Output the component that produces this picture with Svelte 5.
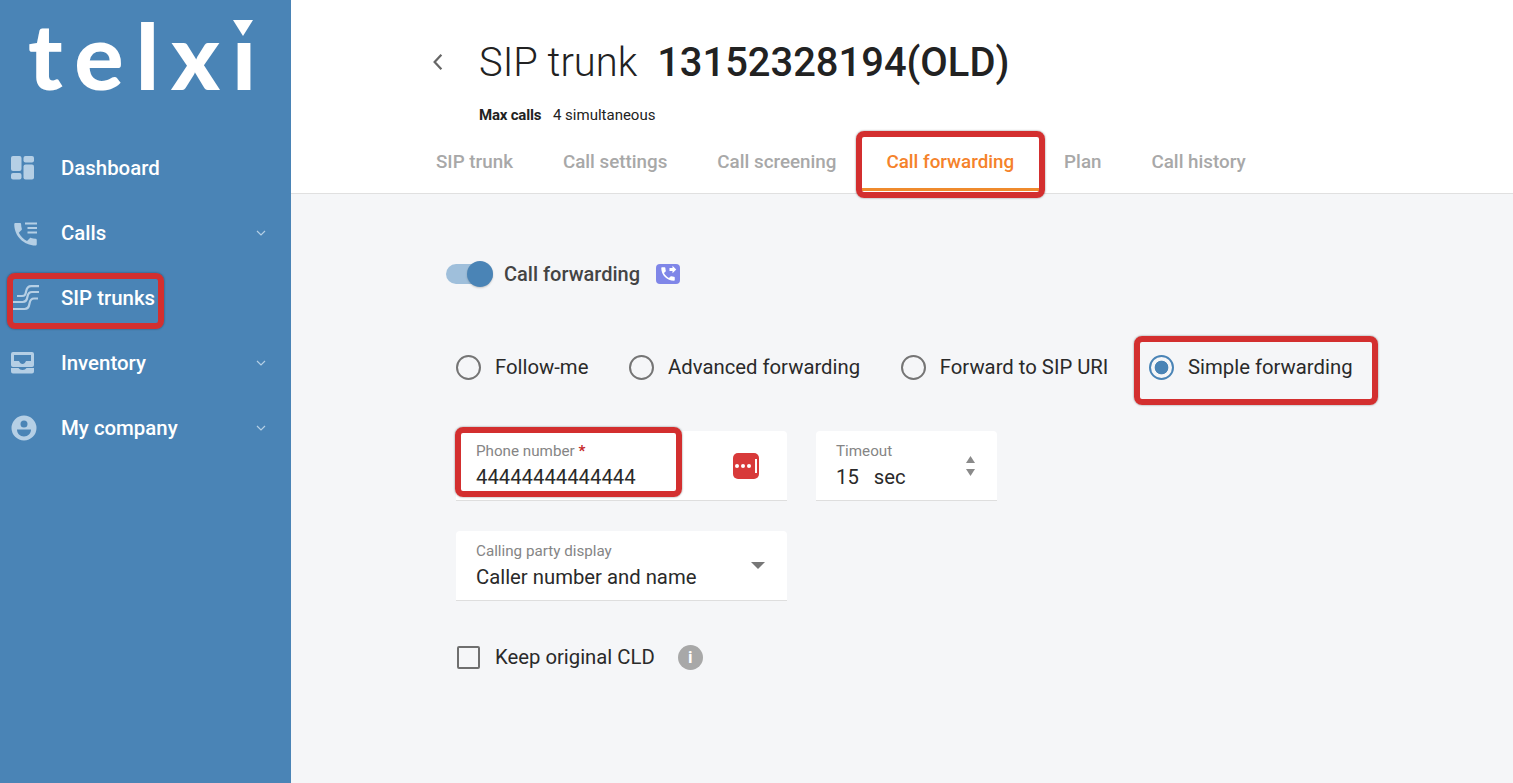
<script>
  const nav = [
    { label: 'Dashboard', icon: 'dashboard' },
    { label: 'Calls', icon: 'calls', more: true },
    { label: 'SIP trunks', icon: 'trunks' },
    { label: 'Inventory', icon: 'inventory', more: true },
    { label: 'My company', icon: 'company', more: true }
  ]
  const tabs = ['SIP trunk', 'Call settings', 'Call screening', 'Call forwarding', 'Plan', 'Call history']
  const radios = [
    { label: 'Follow-me' },
    { label: 'Advanced forwarding' },
    { label: 'Forward to SIP URI' },
    { label: 'Simple forwarding', on: true }
  ]
</script>

<div class="page">
  <aside class="sidebar">
    <div class="logo">
      <span>telxı</span>
      <svg class="logo-tip" viewBox="0 0 20 16"><path d="M0 0h20L10 16z" fill="#fff" /></svg>
    </div>
    <nav>
      {#each nav as item}
        <div class="nav-item">
          <svg class="nav-icon" viewBox="0 0 26 26" fill="#b5cfe5">
            {#if item.icon === 'dashboard'}
              <rect x="0" y="1" width="10.500" height="15" rx="2" />
              <rect x="0" y="18" width="10.500" height="6.500" rx="2" />
              <rect x="12.500" y="1" width="10.500" height="6.500" rx="2" />
              <rect x="12.500" y="9.500" width="10.500" height="15" rx="2" />
            {:else if item.icon === 'calls'}
              <path transform="scale(1.25) translate(-0.4 -0.6)" d="M6.62 10.79c1.44 2.83 3.76 5.14 6.59 6.59l2.2-2.2c.27-.27.67-.36 1.02-.24 1.12.37 2.33.57 3.57.57.55 0 1 .45 1 1V20c0 .55-.45 1-1 1-9.39 0-17-7.61-17-17 0-.55.45-1 1-1h3.500c.55 0 1 .45 1 1 0 1.25.2 2.45.57 3.57.11.35.03.74-.25 1.02l-2.2 2.2z" />
              <path d="M14 3.500h12M16.500 8h9.500M16.500 12.500h9.500" stroke="#b5cfe5" stroke-width="2.200" fill="none" />
            {:else if item.icon === 'trunks'}
              <g fill="none" stroke="#b5cfe5" stroke-width="2.200">
                <path d="M6 11h5c3 0 3.500-1.500 4.200-5 .6-3 2-4.800 5-4.800H28" />
                <path d="M2 17h9.500c3.500 0 4.500-2 5-5.500.5-3 1.500-4.500 4.500-4.500H28" />
                <path d="M2 24h11.500c3.500 0 4.500-2 5-5.500.5-3 1.500-5 4.500-5H27" />
              </g>
            {:else if item.icon === 'inventory'}
              <path fill-rule="evenodd" d="M2 2h19a2 2 0 0 1 2 2v11a2 2 0 0 1-2 2H2a2 2 0 0 1-2-2V4a2 2 0 0 1 2-2zm1 3v6h5c.8 2 2 3 3.500 3s2.700-1 3.500-3h5V5z" />
              <path d="M0 18h7.500c.8 1.300 2.200 2 4 2s3.200-.7 4-2H23v3.500a2 2 0 0 1-2 2H2a2 2 0 0 1-2-2z" />
            {:else}
              <path fill-rule="evenodd" d="M13 0.500a12.500 12.500 0 1 1 0 25 12.500 12.500 0 0 1 0-25zm0 5a3.500 3.500 0 1 0 0 7 3.500 3.500 0 0 0 0-7zm-7 9c0 4 3 7 7 7s7-3 7-7z" />
            {/if}
          </svg>
          <span class="nav-label">{item.label}</span>
          {#if item.more}
            <svg class="nav-more" viewBox="0 0 10 6"><path d="M1 1l4 4 4-4" fill="none" stroke="#b5cfe5" stroke-width="1.200" /></svg>
          {/if}
        </div>
      {/each}
    </nav>
  </aside>

  <main class="main">
    <header class="header">
      <div class="title-row">
        <svg class="back" viewBox="0 0 10 16"><path d="M8 1.500L2 8l6 6.500" fill="none" stroke="#666" stroke-width="2" /></svg>
        <h1><span class="light">SIP trunk</span> <span class="number">13152328194(OLD)</span></h1>
      </div>
      <div class="meta"><b>Max calls</b> <span>4 simultaneous</span></div>
      <div class="tabs">
        {#each tabs as tab}
          <div class="tab" class:active={tab === 'Call forwarding'}>{tab}</div>
        {/each}
      </div>
    </header>

    <section class="content">
      <div class="switch-row">
        <div class="switch"><div class="knob"></div></div>
        <span class="switch-label">Call forwarding</span>
        <span class="badge">
          <svg viewBox="0 0 24 24" width="18" height="18">
            <path d="M18 11l5-5-5-5v3h-4v4h4v3zm2 4.500c-1.250 0-2.450-.2-3.570-.57-.35-.11-.74-.03-1.020.24l-2.200 2.200c-2.830-1.440-5.150-3.750-6.590-6.580l2.200-2.210c.28-.27.36-.66.25-1.010C8.700 6.450 8.500 5.250 8.500 4c0-.55-.45-1-1-1H4c-.55 0-1 .45-1 1 0 9.390 7.610 17 17 17 .55 0 1-.45 1-1v-3.500c0-.55-.45-1-1-1z" fill="#fff" />
          </svg>
        </span>
      </div>

      <div class="radios">
        {#each radios as radio}
          <label class="radio" class:on={radio.on}>
            <span class="ring"></span>
            <span>{radio.label}</span>
          </label>
        {/each}
      </div>

      <div class="fields">
        <div class="field wide">
          <div class="field-text">
            <div class="field-label">Phone number <i>*</i></div>
            <div class="field-value">44444444444444</div>
          </div>
          <span class="dots"><i></i><i></i><i></i><b></b></span>
        </div>
        <div class="field short">
          <div class="field-text">
            <div class="field-label">Timeout</div>
            <div class="field-value">15<span class="unit">sec</span></div>
          </div>
          <svg class="stepper" viewBox="0 0 11 22">
            <path d="M5.500 1l4.500 7H1z" fill="#8a8a8a" />
            <path d="M5.500 21l4.500-7H1z" fill="#8a8a8a" />
          </svg>
        </div>
      </div>

      <div class="fields">
        <div class="field wide">
          <div class="field-text">
            <div class="field-label">Calling party display</div>
            <div class="field-value">Caller number and name</div>
          </div>
          <svg class="caret" viewBox="0 0 14 7"><path d="M0 0h14L7 7z" fill="#777" /></svg>
        </div>
      </div>

      <div class="check-row">
        <span class="box"></span>
        <span class="check-label">Keep original CLD</span>
        <span class="info">i</span>
      </div>
    </section>
  </main>

  <!-- red callouts drawn on top of the screenshot -->
  <div class="callout c-tab"></div>
  <div class="callout c-nav"></div>
  <div class="callout c-radio"></div>
  <div class="callout c-phone"></div>
</div>

<style>
  :global(body) {
    margin: 0;
    font-family: Roboto, "Liberation Sans", sans-serif;
    color: #222;
  }

  .page {
    position: relative;
    display: flex;
    width: 1513px;
    height: 783px;
    overflow: hidden;
  }

  .sidebar {
    flex: 0 0 291px;
    background: #4a84b6;
    color: #fff;
  }

  .logo {
    position: relative;
    height: 135px;
    padding-left: 28px;
    box-sizing: border-box;
    font-family: Lato, sans-serif;
    font-weight: 900;
    font-size: 92px;
    line-height: 109px;
    letter-spacing: 12px;
    white-space: nowrap;
  }

  .logo-tip {
    position: absolute;
    left: 233px;
    top: 20px;
    width: 20px;
    height: 16px;
  }

  .nav-item {
    display: flex;
    align-items: center;
    height: 65px;
    padding: 0 24px 0 11px;
  }

  .nav-icon {
    flex: 0 0 26px;
    width: 26px;
    height: 26px;
    margin-right: 24px;
    overflow: visible;
  }

  .nav-label {
    flex: 1;
    font-size: 20.400px;
    font-weight: 500;
  }

  .nav-more {
    width: 10px;
    height: 6px;
    margin-right: 1px;
  }

  .main {
    flex: 1;
    display: flex;
    flex-direction: column;
    background: #f5f6f8;
  }

  .header {
    height: 194px;
    box-sizing: border-box;
    background: #fff;
    border-bottom: 1px solid #e0e0e0;
    padding: 34px 0 0 120px;
  }

  .title-row {
    display: flex;
    align-items: center;
    height: 56px;
    padding-left: 21px;
  }

  .back {
    width: 12px;
    height: 18px;
    margin-right: 35px;
  }

  h1 {
    margin: 0;
    font-size: 39.900px;
    font-weight: 400;
    white-space: pre;
  }

  .light {
    font-weight: 300;
    margin-right: 10px;
  }

  .number {
    font-weight: 500;
  }

  .meta {
    margin: 13px 0 0 68px;
    height: 24px;
    font-size: 15px;
    line-height: 24px;
  }

  .meta b {
    font-weight: 700;
    margin-right: 8px;
    letter-spacing: -0.200px;
  }

  .tabs {
    display: flex;
  }

  .tab {
    padding: 23px 25px 0;
    height: 64px;
    box-sizing: border-box;
    line-height: 24px;
    font-size: 18.800px;
    font-weight: 500;
    color: #a8a8a8;
    white-space: nowrap;
  }

  .tab.active {
    color: #f5822a;
    border-bottom: 3px solid #ef8a2c;
  }

  .content {
    padding: 67px 0 0 165px;
  }

  .switch-row {
    display: flex;
    align-items: center;
    height: 26px;
    margin-left: -10px;
  }

  .switch {
    position: relative;
    width: 47px;
    height: 20px;
    border-radius: 10px;
    background: #9fbfdb;
  }

  .knob {
    position: absolute;
    right: 0;
    top: -3px;
    width: 26px;
    height: 26px;
    border-radius: 50%;
    background: #4a84b6;
    box-shadow: 0 1px 2px rgba(0, 0, 0, 0.2);
  }

  .switch-label {
    margin-left: 11px;
    font-size: 20px;
    font-weight: 500;
    color: #444;
  }

  .badge {
    display: flex;
    align-items: center;
    justify-content: center;
    margin-left: 16px;
    width: 24px;
    height: 20px;
    border-radius: 4px;
    background: #7f86e8;
  }

  .radios {
    display: flex;
    margin-top: 67px;
    height: 26px;
  }

  .radio {
    display: flex;
    align-items: center;
    gap: 14px;
    margin-right: 40.700px;
    font-size: 20.300px;
    color: #2a2a2a;
    white-space: nowrap;
  }

  .ring {
    width: 25px;
    height: 25px;
    box-sizing: border-box;
    border: 2.500px solid #757575;
    border-radius: 50%;
  }

  .radio.on .ring {
    border-color: #4a84b6;
    background: radial-gradient(circle, #4a84b6 0 6.500px, transparent 7.200px);
  }

  .fields {
    display: flex;
    gap: 29px;
    margin-top: 30px;
  }

  .radios + .fields {
    margin-top: 51px;
  }

  .field {
    display: flex;
    align-items: center;
    justify-content: space-between;
    height: 70px;
    box-sizing: border-box;
    padding: 0 22px 0 20px;
    background: #fff;
    border-bottom: 1px solid #dedede;
    border-radius: 4px 4px 0 0;
  }

  .wide {
    width: 331px;
  }

  .wide:has(.dots) {
    padding-right: 28px;
  }

  .short {
    width: 181px;
    padding-right: 21px;
  }

  .field-text {
    margin-top: -1px;
  }

  .field-label {
    font-size: 15.200px;
    line-height: 18px;
    color: #858585;
  }

  .field-label i {
    color: #c62828;
    font-style: normal;
    font-weight: 700;
  }

  .field-value {
    margin-top: 5px;
    font-size: 20.300px;
    line-height: 24px;
    color: #2a2a2a;
  }

  .unit {
    margin-left: 15px;
  }

  .dots {
    display: flex;
    align-items: center;
    gap: 2px;
    justify-content: center;
    width: 26px;
    height: 26px;
    border-radius: 5px;
    background: #d83a3a;
  }

  .dots i {
    width: 4px;
    height: 4px;
    border-radius: 50%;
    background: #fff;
  }

  .dots b {
    width: 1.500px;
    height: 14px;
    margin-left: 2px;
    background: #fff;
  }

  .stepper {
    width: 11px;
    height: 22px;
  }

  .caret {
    width: 14px;
    height: 7px;
  }

  .check-row {
    display: flex;
    align-items: center;
    margin-top: 44px;
    height: 24px;
  }

  .box {
    width: 23px;
    height: 23px;
    box-sizing: border-box;
    margin-left: 1px;
    border: 2.500px solid #6f6f6f;
    border-radius: 2px;
  }

  .check-label {
    margin-left: 15px;
    font-size: 20.300px;
    color: #2a2a2a;
  }

  .info {
    width: 25px;
    height: 25px;
    margin-left: 23px;
    border-radius: 50%;
    background: #a8a8a8;
    color: #fff;
    font-size: 17px;
    font-weight: 700;
    line-height: 25px;
    text-align: center;
  }

  .callout {
    position: absolute;
    box-sizing: border-box;
    border: 6px solid #d32f2f;
    border-radius: 8px;
    box-shadow: 0 0 2px rgba(0, 0, 0, 0.5);
  }

  .c-tab {
    left: 856px;
    top: 131px;
    width: 189px;
    height: 67px;
  }

  .c-nav {
    left: 7px;
    top: 273px;
    width: 157px;
    height: 56px;
  }

  .c-radio {
    left: 1134px;
    top: 336px;
    width: 244px;
    height: 69px;
  }

  .c-phone {
    left: 455px;
    top: 427px;
    width: 227px;
    height: 70px;
  }
</style>
